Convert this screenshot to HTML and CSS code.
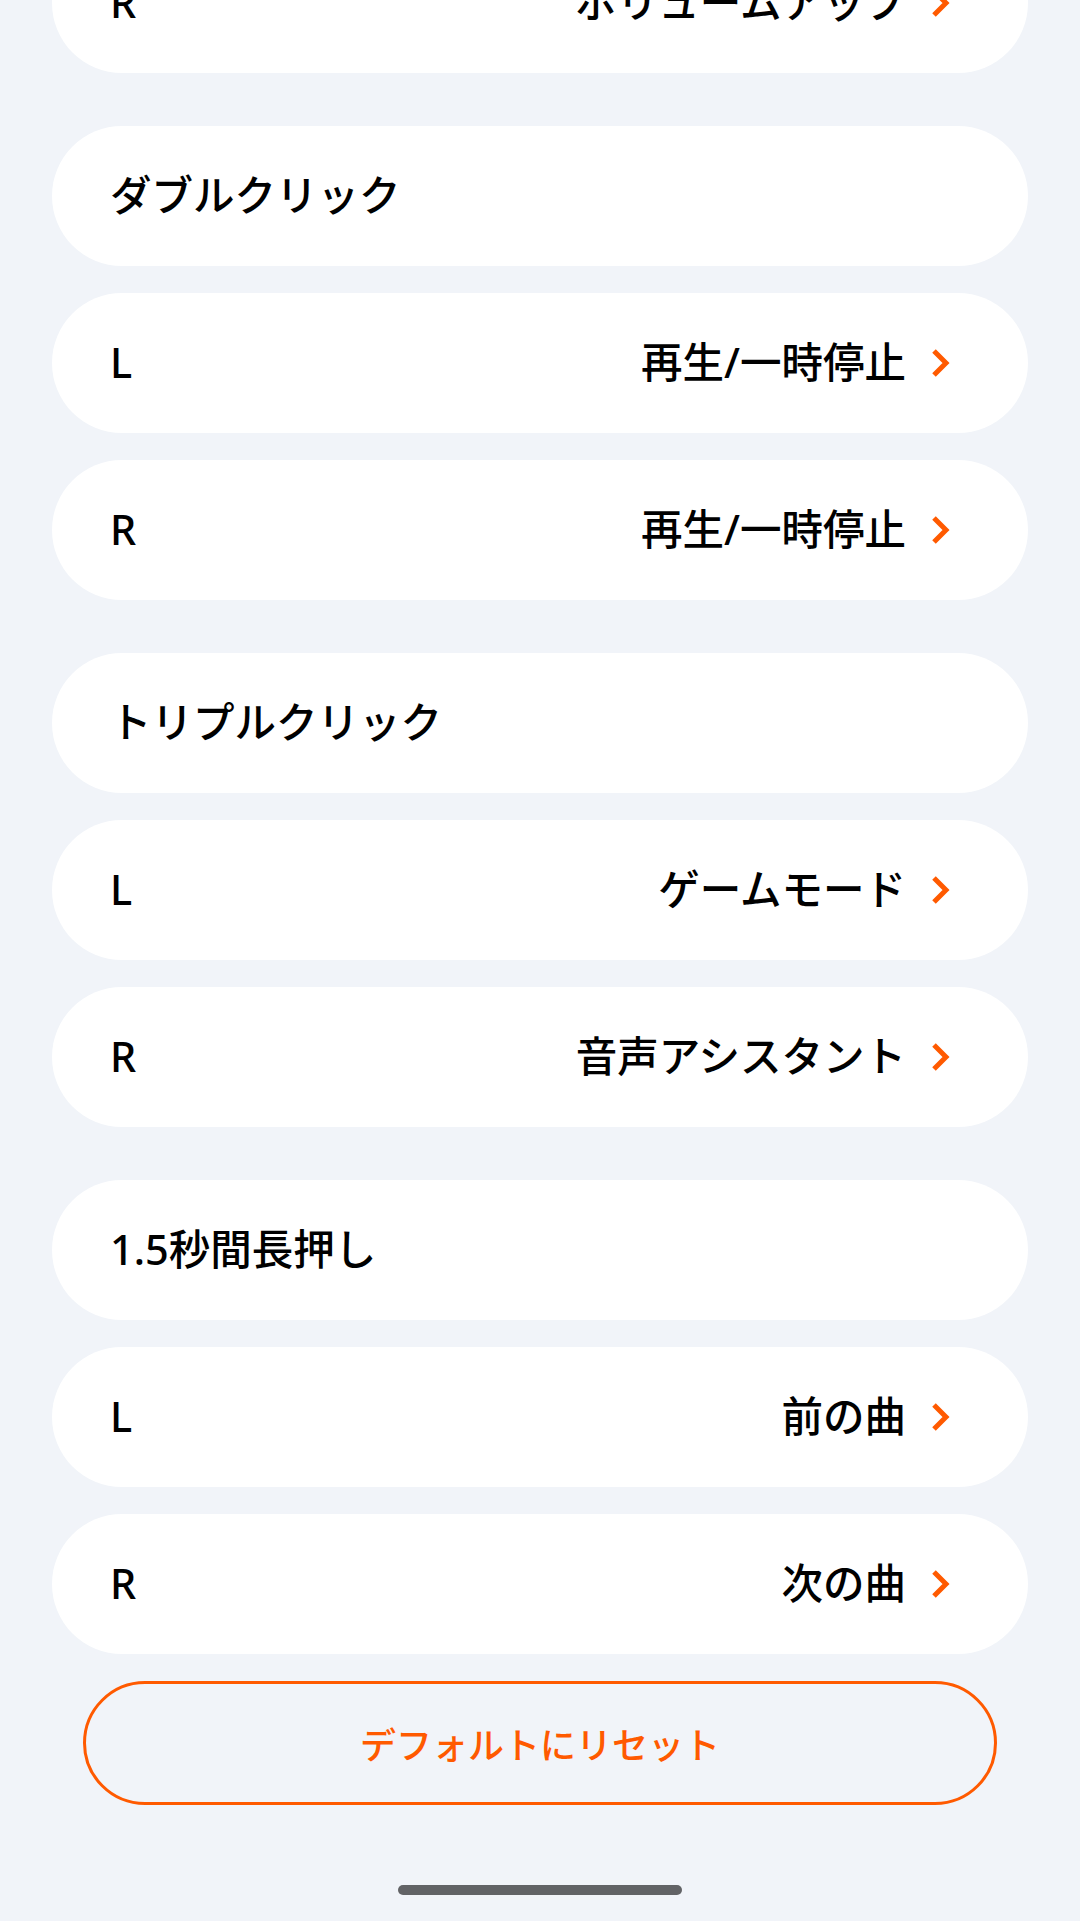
FILE: index.html
```html
<!DOCTYPE html>
<html lang="ja">
<head>
<meta charset="utf-8">
<link rel="stylesheet" href="styles.css">
</head>
<body>
<main class="page">
  <section class="group first">
    <div class="card row"><span class="side">R</span><span class="value">ボリュームアップ<svg class="chev" viewBox="0 0 20 30"><polyline points="4,3 16,15 4,27"/></svg></span></div>
  </section>
  <section class="group">
    <div class="card head">ダブルクリック</div>
    <div class="card row"><span class="side">L</span><span class="value">再生/一時停止<svg class="chev" viewBox="0 0 20 30"><polyline points="4,3 16,15 4,27"/></svg></span></div>
    <div class="card row"><span class="side">R</span><span class="value">再生/一時停止<svg class="chev" viewBox="0 0 20 30"><polyline points="4,3 16,15 4,27"/></svg></span></div>
  </section>
  <section class="group">
    <div class="card head">トリプルクリック</div>
    <div class="card row"><span class="side">L</span><span class="value">ゲームモード<svg class="chev" viewBox="0 0 20 30"><polyline points="4,3 16,15 4,27"/></svg></span></div>
    <div class="card row"><span class="side">R</span><span class="value">音声アシスタント<svg class="chev" viewBox="0 0 20 30"><polyline points="4,3 16,15 4,27"/></svg></span></div>
  </section>
  <section class="group">
    <div class="card head">1.5秒間長押し</div>
    <div class="card row"><span class="side">L</span><span class="value">前の曲<svg class="chev" viewBox="0 0 20 30"><polyline points="4,3 16,15 4,27"/></svg></span></div>
    <div class="card row"><span class="side">R</span><span class="value">次の曲<svg class="chev" viewBox="0 0 20 30"><polyline points="4,3 16,15 4,27"/></svg></span></div>
  </section>
  <button class="reset">デフォルトにリセット</button>
  <div class="home-bar"></div>
</main>
</body>
</html>
```

FILE: styles.css
```css
html, body {
  margin: 0;
  padding: 0;
  background: #f1f4f9;
  height: 1921px;
  overflow: hidden;
}
body {
  font-family: "Noto Sans", "Noto Sans CJK JP", sans-serif;
  color: #000;
}
.page {
  display: flex;
  flex-direction: column;
  padding: 0 52px;
  margin-top: -67px;
}
.group {
  display: flex;
  flex-direction: column;
  gap: 27px;
  margin-bottom: 53px;
}
.group:nth-last-of-type(1) {
  margin-bottom: 27px;
}
.card {
  background: #fff;
  height: 140px;
  border-radius: 70px;
  display: flex;
  align-items: center;
  box-sizing: border-box;
  padding: 0 78px 0 58px;
  font-size: 41.5px;
  font-weight: 500;
  line-height: 1;
}
.row {
  justify-content: space-between;
}
.value {
  display: flex;
  align-items: center;
  gap: 24px;
}
.chev {
  width: 20px;
  height: 30px;
  fill: none;
  stroke: #ff5a00;
  stroke-width: 5;
  stroke-linecap: butt;
  stroke-linejoin: miter;
}
.reset {
  margin: 0 31px;
  height: 124px;
  border: 3px solid #ff5a00;
  border-radius: 62px;
  background: transparent;
  color: #ff5a00;
  font-family: "Noto Sans", "Noto Sans CJK JP", sans-serif;
  font-size: 36px;
  font-weight: 500;
}
.home-bar {
  align-self: center;
  width: 284px;
  height: 10px;
  border-radius: 5px;
  background: #626366;
  margin-top: 80px;
}
```
